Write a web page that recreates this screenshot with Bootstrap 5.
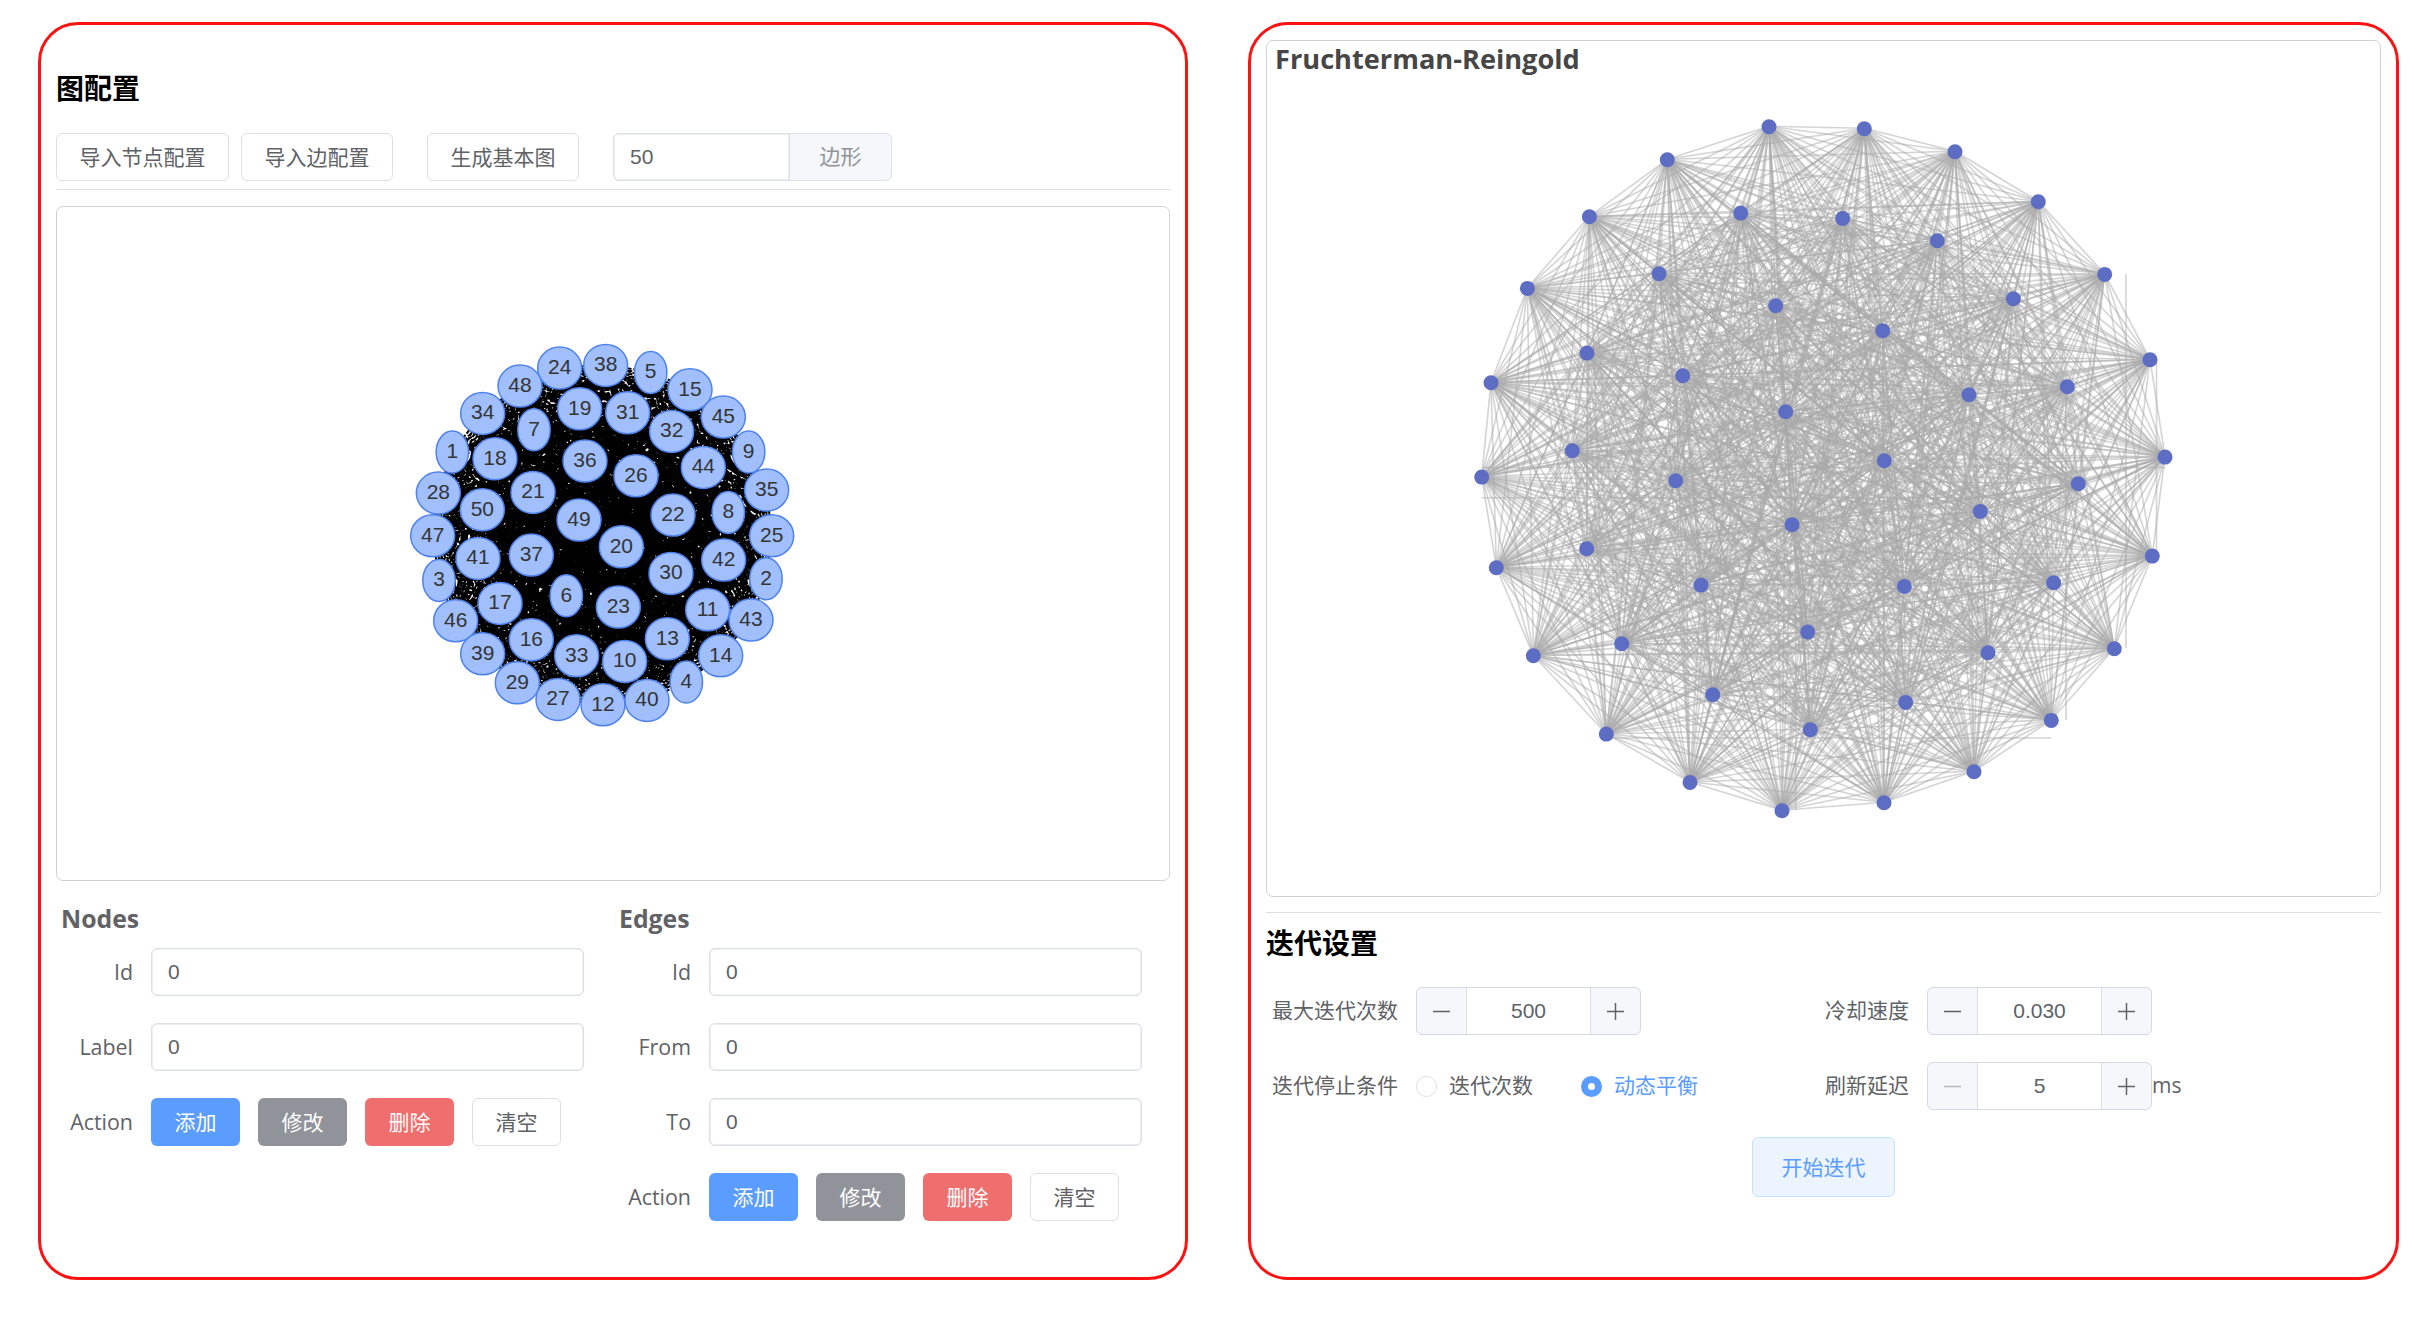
<!DOCTYPE html>
<html lang="zh-CN">
<head>
<meta charset="utf-8">
<title>Fruchterman-Reingold</title>
<link rel="stylesheet" href="https://cdn.jsdelivr.net/npm/bootstrap@5.3.0/dist/css/bootstrap.min.css">
<style>
body{font-family:"Open Sans","Noto Sans CJK SC",sans-serif;font-size:21px;line-height:1.5;color:#606266;background:#fff;height:1328px;overflow:hidden;padding:22px 22px 0 38px}
.pane{width:1150px;height:1258px;border:3px solid #fb1313;border-radius:40px;padding:0 15px}
.pane-left{margin-right:60px;padding-top:42px}
.pane-right{width:1151px;padding-top:15px}
.ttl{font-size:28px;line-height:42px;font-weight:700;color:#000;margin:0}
.rule{height:1px;background:#dcdfe6}
.graph{border:1px solid #d0d2d6;border-radius:7px}
.graph-cfg{height:675px;margin-top:16px}
.graph-run{height:857px;margin-bottom:15px}
.graph svg{display:block;width:100%;height:100%}
.tools{margin-top:24px}
.settings{margin-top:23px}
.w6{width:173px}
.w5{width:152px}
.btn{height:48px;padding:0 22px;font-size:21px;line-height:46px;border-radius:6px;border-color:#dcdfe6;color:#606266;white-space:nowrap}
.btn-act{width:89px;padding:0;color:#fff;border:0;line-height:48px}
.btn-add{background:#5a9cff}.btn-mod{background:#909399}.btn-del{background:#ef6e6e}
.btn-clr{color:#606266;border:1px solid #dcdfe6;line-height:46px}
.acts{gap:18px}
.form-control,.input-group-text{height:48px;border:1px solid #dcdfe6;border-radius:6px;color:#606266;font-size:21px;font-family:"Liberation Sans","Noto Sans CJK SC",sans-serif;padding:0 16px}
.form-control{box-shadow:inset 0 0 0 .5px #dcdfe6}
.frow .form-control{width:433px}
.sides{width:279px}
.input-group-text{background:#f5f7fa;color:#909399;width:103px;justify-content:center}
.forms{margin-top:18px}
.sub{font-size:24.8px;line-height:38px;font-weight:700;padding-left:5px;margin-bottom:11px}
.frow{height:48px;margin-bottom:27px}
.lbl{width:77px;margin-right:18px;font-size:21.4px;text-align:right;white-space:nowrap}
.lbl-6{width:132px;font-size:21px}
.lbl-4{width:90px;font-size:21px}
.fcol{width:558px;flex:none}
.fcol-run{width:553px}
.num{width:225px;height:48px;border:1px solid #d6d9e2;border-radius:6px;background:#f5f7fa;overflow:hidden}
.num svg{width:49px;height:22px;flex:none}
.num path{stroke:#606266;stroke-width:1.5;fill:none}
.num .off path{stroke:#b4b6bb}
.num span{height:46px;background:#fff;border:solid #dcdfe6;border-width:0 1px;font:21px/45px "Liberation Sans",sans-serif;text-align:center}
.dot{width:21px;height:21px;border:1px solid #dcdfe6;border-radius:50%;margin-right:12px;flex:none}
.dot-on{border:7.5px solid #5a9cff;margin-left:48px}
.blue{color:#5a9cff}
.btn-run{width:143px;height:60px;line-height:58px;padding:0;background:#ecf5ff;border-color:#c6e0ff;color:#5a9cff}
.gt{font:700 27.2px "Open Sans",sans-serif;fill:#464646}
.nt{font:21px "Liberation Sans",sans-serif;fill:#343434;text-anchor:middle}
</style>
<script src="https://cdn.jsdelivr.net/npm/bootstrap@5.3.0/dist/js/bootstrap.bundle.min.js"></script>
</head>
<body class="d-flex">
<section class="pane pane-left flex-shrink-0 d-flex flex-column">
  <h2 class="ttl">图配置</h2>
  <div class="tools d-flex">
    <button class="btn bg-white w6">导入节点配置</button>
    <button class="btn bg-white w5" style="margin-left:12px">导入边配置</button>
    <button class="btn bg-white w5" style="margin-left:34px">生成基本图</button>
    <div class="input-group sides" style="margin-left:34px">
      <input class="form-control" value="50"><span class="input-group-text">边形</span>
    </div>
  </div>
  <div class="rule mt-2"></div>
  <div class="graph graph-cfg"><svg id="g1" viewBox="57 207 1112 673"></svg></div>
  <div class="forms d-flex">
    <div class="fcol">
      <div class="sub">Nodes</div>
      <div class="frow d-flex align-items-center"><div class="lbl">Id</div><input class="form-control" value="0"></div>
      <div class="frow d-flex align-items-center"><div class="lbl">Label</div><input class="form-control" value="0"></div>
      <div class="frow d-flex align-items-center"><div class="lbl">Action</div><div class="acts d-flex"><button class="btn btn-act btn-add">添加</button><button class="btn btn-act btn-mod">修改</button><button class="btn btn-act btn-del">删除</button><button class="btn btn-act btn-clr">清空</button></div></div>
    </div>
    <div class="fcol">
      <div class="sub">Edges</div>
      <div class="frow d-flex align-items-center"><div class="lbl">Id</div><input class="form-control" value="0"></div>
      <div class="frow d-flex align-items-center"><div class="lbl">From</div><input class="form-control" value="0"></div>
      <div class="frow d-flex align-items-center"><div class="lbl">To</div><input class="form-control" value="0"></div>
      <div class="frow d-flex align-items-center"><div class="lbl">Action</div><div class="acts d-flex"><button class="btn btn-act btn-add">添加</button><button class="btn btn-act btn-mod">修改</button><button class="btn btn-act btn-del">删除</button><button class="btn btn-act btn-clr">清空</button></div></div>
    </div>
  </div>
</section>
<section class="pane pane-right flex-shrink-0 d-flex flex-column">
  <div class="graph graph-run"><svg id="g2" viewBox="1267 41 1113 855"></svg></div>
  <div class="rule"></div>
  <h2 class="ttl" style="margin-top:9px">迭代设置</h2>
  <div class="settings d-flex">
    <div class="fcol-run">
      <div class="frow d-flex align-items-center"><div class="lbl lbl-6">最大迭代次数</div>
        <div class="num d-flex align-items-center"><svg viewBox="0 0 49 22"><path d="M16 11.5h17"/></svg><span class="flex-fill">500</span><svg viewBox="0 0 49 22"><path d="M16 11.5h17M24.5 3v17"/></svg></div></div>
      <div class="frow d-flex align-items-center"><div class="lbl lbl-6">迭代停止条件</div>
        <i class="dot"></i><span>迭代次数</span><i class="dot dot-on"></i><span class="blue">动态平衡</span></div>
    </div>
    <div>
      <div class="frow d-flex align-items-center"><div class="lbl lbl-4">冷却速度</div>
        <div class="num d-flex align-items-center"><svg viewBox="0 0 49 22"><path d="M16 11.5h17"/></svg><span class="flex-fill">0.030</span><svg viewBox="0 0 49 22"><path d="M16 11.5h17M24.5 3v17"/></svg></div></div>
      <div class="frow d-flex align-items-center"><div class="lbl lbl-4">刷新延迟</div>
        <div class="num d-flex align-items-center"><svg class="off" viewBox="0 0 49 22"><path d="M16 11.5h17"/></svg><span class="flex-fill">5</span><svg viewBox="0 0 49 22"><path d="M16 11.5h17M24.5 3v17"/></svg></div><div>ms</div></div>
    </div>
  </div>
  <button class="btn btn-run align-self-center">开始迭代</button>
</section>
<script>
// left network: id, centre x, centre y in thirds of a pixel from (390,320)
const L=[[38,647,135],[24,509,143],[5,782,156],[48,390,197],[15,900,208],[34,278,279],[19,569,265],[31,713,277],[7,432,328],[32,845,333],[45,1000,290],[1,187,395],[18,315,415],[36,585,422],[9,1076,395],[26,738,466],[44,940,441],[28,145,518],[21,429,516],[35,1130,509],[50,277,568],[8,1015,576],[22,849,584],[49,567,599],[47,128,646],[25,1145,646],[20,694,679],[41,264,714],[37,424,704],[42,1001,719],[3,147,780],[2,1128,775],[30,843,759],[6,529,826],[17,330,849],[23,685,860],[11,953,868],[46,197,901],[43,1083,899],[16,424,958],[13,832,955],[39,278,1000],[33,560,1006],[10,704,1023],[14,992,1006],[29,382,1087],[4,889,1085],[27,504,1137],[12,639,1153],[40,771,1140]].map(n=>[n[0],390+n[1]/3,320+n[2]/3]);
let s='',d='';
for(let i=0;i<50;i++)for(let j=i+1;j<50;j++)d+=`M${L[i][1].toFixed(1)} ${L[i][2].toFixed(1)}L${L[j][1].toFixed(1)} ${L[j][2].toFixed(1)}`;
s=`<path d="${d}" stroke="#000" stroke-width="2" stroke-dasharray="7.5 1.8" fill="none"/>`;
for(const [id,x,y] of L)s+=`<ellipse cx="${x}" cy="${y+.4}" rx="${id>9?22:16.2}" ry="21" fill="#a0bffc" stroke="#4f82ee" stroke-width="1.5"/><text class="nt" x="${x}" y="${y+6.4}">${id}</text>`;
document.getElementById('g1').innerHTML=s;

// right network
const R=[[1769,126.3],[1864.3,128.3],[1955,151.3],[1667.3,159.3],[1740.7,212.7],[1842.7,218],[1937.3,240.3],[1659,273.3],[1775.7,305.3],[1882.7,330.3],[2013.3,298.3],[1682.7,375.3],[1785.7,411.3],[1969,394.3],[1884.3,460.3],[1675.7,480.3],[1589.4,216.3],[1527.4,288],[1491,382.3],[1587,352.7],[1572.3,450.3],[1481.7,476.7],[1496.3,567.3],[1586.7,548.3],[1701,584.7],[1792,524.3],[1621.7,643.3],[1533.3,655.3],[1606.3,733.7],[1690,782],[1782,810.3],[1807.7,631.7],[1712.7,694.3],[1810.3,729.3],[2038.3,201.3],[2104.7,274],[2150,359.3],[2165,456.7],[2067.3,386.3],[2078.3,483.3],[1980.3,511],[2152.3,555.7],[2053.7,582.3],[1904.3,586],[2114.3,648.3],[1988,652.3],[2051.3,720],[1905.7,702],[1974,771.3],[1884,802.3]];
const ln=(a,b,c,e)=>`<path d="M${a} ${b}L${c} ${e}"/>`;
s='<g stroke="#aaa" stroke-opacity=".5" stroke-width="1.6">';
// pairs that are drawn as axis-aligned segments
const snap=[[35,44,'v',2126],[36,41,'v',2156.5],[38,46,'v',2066],[21,37,'h',467.5],[21,39,'h',497.7],[28,46,'h',738],[8,30,'v',1795.7]];
for(let i=0;i<50;i++)for(let j=i+1;j<50;j++){
  const a=R[i],b=R[j],k=snap.find(q=>q[0]==i&&q[1]==j);
  if(!k)s+=ln(...a,...b);
  else s+=k[2]=='v'?ln(k[3],a[1],k[3],b[1]):ln(a[0],k[3],b[0],k[3]);
}
s+='</g>';
for(const [x,y] of R)s+=`<circle cx="${x}" cy="${y+.4}" r="7.5" fill="#5e6dc4"/>`;
s+='<text class="gt" x="1275" y="69">Fruchterman-Reingold</text>';
document.getElementById('g2').innerHTML=s;
</script>
</body>
</html>
